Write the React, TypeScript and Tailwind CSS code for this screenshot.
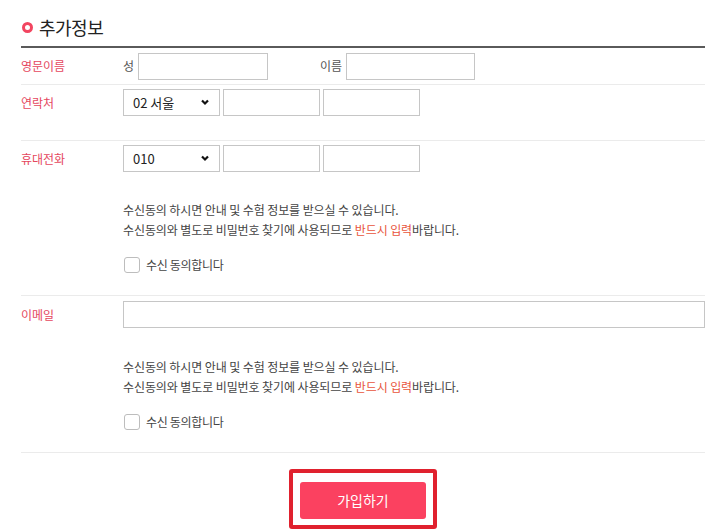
import React from 'react';

// ─── Small pieces ────────────────────────────────────────────────────────────
const font = { fontFamily: '"Noto Sans CJK KR", "Noto Sans", sans-serif' };

function Label({ children }: { children: React.ReactNode }) {
    return <div className="w-[102px] shrink-0 h-[27px] flex items-center text-[12px] text-[#e5475e]">{children}</div>;
}

function TextInput({ className }: { className: string }) {
    return <input type="text" className={`h-[27px] border border-[#c6c6c6] bg-white outline-none px-2 text-[13px] ${className}`} />;
}

function PhoneSelect({ value, options }: { value: string; options: string[] }) {
    return (
        <div className="relative w-[97px] h-[27px]">
            <select
                defaultValue={value}
                className="appearance-none w-full h-full border border-[#c6c6c6] bg-white pl-[9px] text-[13px] text-[#222] outline-none"
            >
                {options.map((o) => <option key={o}>{o}</option>)}
            </select>
            <svg className="absolute right-[11px] top-[10px] w-[8px] h-[7px] pointer-events-none" viewBox="0 0 8 7" fill="none">
                <path d="M1 1.5l3 3 3-3" stroke="#111" strokeWidth="2.2" />
            </svg>
        </div>
    );
}

function Consent() {
    return (
        <div className="text-[12px] text-[#444]">
            <p className="leading-[20px] tracking-[-0.1px]">수신동의 하시면 안내 및 수험 정보를 받으실 수 있습니다.</p>
            <p className="leading-[20px] tracking-[-0.1px]">
                수신동의와 별도로 비밀번호 찾기에 사용되므로 <span className="text-[#e8553c]">반드시 입력</span>바랍니다.
            </p>
            <label className="flex items-center gap-[6px] mt-[17px] h-[16px]">
                <span className="w-[16px] h-[16px] border border-[#bdbdbd] rounded-[3px] bg-white ml-[1px]" />
                <span className="tracking-[-0.3px]">수신 동의합니다</span>
            </label>
        </div>
    );
}

export default function App() {
    return (
        <div className="bg-white w-[717px] h-[531px] overflow-hidden" style={font}>
            <div className="ml-[21px] w-[684px]">
                {/* Title */}
                <div className="flex items-center h-[48px] pt-[8px] border-b-2 border-[#5a5a5a]">
                    <span className="w-[11px] h-[11px] rounded-full border-[3px] border-[#f24560] ml-[1px] mr-[6px]" />
                    <h2 className="text-[18px] text-[#222] tracking-[-0.5px]">추가정보</h2>
                </div>

                {/* English name */}
                <div className="flex items-center h-[37px] border-b border-[#ebebeb]">
                    <Label>영문이름</Label>
                    <span className="w-[15px] text-[12px] text-[#555]">성</span>
                    <TextInput className="w-[130px] h-[26px]" />
                    <span className="ml-[52px] w-[26px] text-[12px] text-[#555]">이름</span>
                    <TextInput className="w-[129px] h-[26px]" />
                </div>

                {/* Phone */}
                <div className="flex items-start h-[56px] pt-[4px] border-b border-[#ebebeb]">
                    <Label>연락처</Label>
                    <div className="flex gap-[3px]">
                        <PhoneSelect value="02 서울" options={['02 서울', '031 경기', '032 인천']} />
                        <TextInput className="w-[97px]" />
                        <TextInput className="w-[97px]" />
                    </div>
                </div>

                {/* Mobile */}
                <div className="flex items-start h-[155px] pt-[4px] border-b border-[#ebebeb]">
                    <Label>휴대전화</Label>
                    <div>
                        <div className="flex gap-[3px]">
                            <PhoneSelect value="010" options={['010', '011', '016']} />
                            <TextInput className="w-[97px]" />
                            <TextInput className="w-[97px]" />
                        </div>
                        <div className="mt-[28px]">
                            <Consent />
                        </div>
                    </div>
                </div>

                {/* Email */}
                <div className="flex items-start h-[157px] pt-[5px] border-b border-[#ebebeb]">
                    <Label>이메일</Label>
                    <div className="flex-1">
                        <TextInput className="w-full h-[26px]" />
                        <div className="mt-[29px]">
                            <Consent />
                        </div>
                    </div>
                </div>

                {/* Submit */}
                <div className="flex justify-center pt-[16px]">
                    <div className="border-4 border-[#e0212e] rounded-[3px] pt-[9px] pb-[6px] px-[7px]">
                        <button className="w-[126px] h-[37px] bg-[#fb4160] rounded-[3px] text-white text-[14px]">가입하기</button>
                    </div>
                </div>
            </div>
        </div>
    );
}
